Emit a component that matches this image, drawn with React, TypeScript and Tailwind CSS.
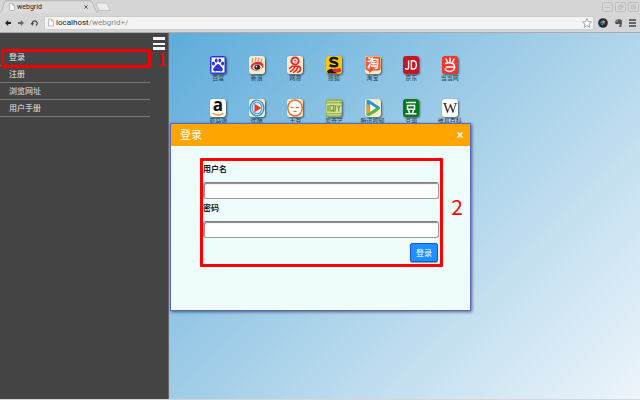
import React from "react";

const FONT = "font-['Open_Sans','Noto_Sans_CJK_SC',sans-serif]";

function PageGlyph({ className }: { className: string }) {
  return (
    <svg viewBox="0 0 6 8" className={className} aria-hidden="true">
      <path d="M0.5 0.5H3.5L5.5 2.5V7.5H0.5Z" fill="#fafafa" stroke="#a3a3a3" strokeWidth="0.7" />
      <path d="M3.5 0.5V2.5H5.5" fill="none" stroke="#a3a3a3" strokeWidth="0.6" />
    </svg>
  );
}

function BrowserChrome() {
  return (
    <header className="shrink-0 border-b border-[#aaaaaa] bg-[#d6d6d6] font-['Roboto',sans-serif]">
      <div className="relative flex h-[13px] items-center">
        <svg viewBox="0 0 112 13" className="absolute left-0 top-0 h-[13px] w-28" aria-hidden="true">
          <path d="M0 12.5C3 12 3 1 6 0.8H90C94 1 94 12 98 12.5" fill="#dcdcdc" stroke="#aaaaaa" strokeWidth="0.8" />
          <path d="M96 3H107L110 10.5H99Z" fill="#ececec" stroke="#b8b8b8" strokeWidth="0.7" strokeLinejoin="round" />
        </svg>
        <div className="relative flex w-[92px] items-center gap-[2px] pl-[9px] pr-[2px]">
          <PageGlyph className="h-2 w-[6px]" />
          <span className="flex-1 text-[7px] leading-[10px] text-[#222222]">webgrid</span>
          <button aria-label="Close tab" className="flex w-2 justify-center">
            <svg viewBox="0 0 4 4" className="h-1 w-1"><path d="M0.3 0.3L3.7 3.7M3.7 0.3L0.3 3.7" stroke="#555555" strokeWidth="0.9" /></svg>
          </button>
        </div>
        <div className="ml-auto flex gap-[2px] pr-px">
          {["M3 5.5H8", "M3.5 4.5H6.5V7H3.5ZM5 4.5V3H8V5.5H6.5", "M3.5 3L7.5 7M7.5 3L3.5 7M3.5 3H7.5V7H3.5Z"].map((d, i) => (
            <button key={d} aria-label={["Minimise", "Restore", "Close"][i]}>
              <svg viewBox="0 0 11 10" className="h-[10px] w-[11px]" fill="none" stroke="#b8b8b8" strokeWidth="0.8">
                <rect x="0.5" y="0.5" width="10" height="9" rx="1" />
                <path d={d} />
              </svg>
            </button>
          ))}
        </div>
      </div>
      <div className="flex h-[19px] items-center pl-1">
        <div className="flex w-10 items-center gap-[5px]">
          <button aria-label="Back"><svg viewBox="0 0 8 8" className="h-2 w-2"><path d="M1 4L4.2 1V3H7V5H4.2V7Z" fill="#222222" /></svg></button>
          <button aria-label="Forward"><svg viewBox="0 0 8 8" className="h-2 w-2"><path d="M7 4L3.8 1V3H1V5H3.8V7Z" fill="#666666" /></svg></button>
          <button aria-label="Reload"><svg viewBox="0 0 8 8" className="h-2 w-2"><path d="M2.4 5A2.4 2.4 0 1 1 6 6.4" fill="none" stroke="#444444" strokeWidth="1.2" /><path d="M0.6 4H4L2.3 6.8Z" fill="#444444" /></svg></button>
        </div>
        <div className="flex h-[14px] flex-1 items-center gap-[2px] rounded-[1px] border border-[#cccccc] bg-[#f3f3f3] pl-[3px] pr-px">
          <PageGlyph className="h-[9px] w-[6px]" />
          <span className="flex-1 text-[8px] leading-[12px] text-[#888888]"><span className="text-[#222222]">localhost</span>/webgrid+/</span>
          <svg viewBox="0 0 24 24" className="h-[10px] w-[10px]" aria-hidden="true"><path d="M12 1.5L15.2 8.6L23 9.4L17.2 14.6L18.8 22.3L12 18.4L5.2 22.3L6.8 14.6L1 9.4L8.8 8.6Z" fill="#fafafa" stroke="#999999" strokeWidth="2" /></svg>
        </div>
        <div className="flex items-center gap-[6px] pl-[4px] pr-1">
          <svg viewBox="0 0 10 10" className="h-[10px] w-[10px]" aria-hidden="true">
            <circle cx="5" cy="5" r="4.8" fill="#25272d" />
            <path d="M5 5L3 3L5.5 2Z" fill="#18a86b" /><path d="M5 5L5.5 2L7.5 4Z" fill="#e6c52b" /><path d="M5 5L7.5 4.5L6.5 7Z" fill="#da3d4d" /><path d="M5 5L5 7.8L2.5 6Z" fill="#3277e0" /><path d="M5 5L2.3 5.5L3 3Z" fill="#22b8c9" />
          </svg>
          <svg viewBox="0 0 10 10" className="h-[10px] w-[9px]" aria-hidden="true"><path d="M1 3L3.2 0.8V3ZM3.8 0.8H5.5L8 1.5C9 2 9 6 8.3 8.5C8 9.7 5.5 9.6 5.5 8.3C5.5 7.2 7 7.4 7 7.4C7 6.5 5.6 6.3 5.2 5.5C5 6.5 2.5 6.4 1.7 5.8C1.2 5.2 1 4.2 1 3.6H3.8Z" fill="#505050" /></svg>
          <button aria-label="Browser menu"><svg viewBox="0 0 7 8" className="h-2 w-[7px]"><path d="M0 1H7M0 4H7M0 7H7" stroke="#444444" strokeWidth="1.3" /></svg></button>
        </div>
      </div>
    </header>
  );
}

const MENU = ["登录", "注册", "浏览网址", "用户手册"];

function Sidebar() {
  return (
    <aside className="relative w-[169px] shrink-0 border-r border-[#666666] bg-[#444444]">
      <div className="flex h-4 justify-end pr-[3px] pt-1">
        <button aria-label="菜单" className="flex h-[13px] w-3 flex-col justify-between">
          <span className="h-[3px] w-full bg-[#f4f4f4]" />
          <span className="h-[2px] w-full bg-white" />
          <span className="h-[3px] w-full bg-[#f4f4f4]" />
        </button>
      </div>
      <nav className="mr-[18px]">
        {MENU.map((label) => (
          <a key={label} href="#" className="block border-b border-[#777777] pl-[9px] text-[8px] leading-4 text-[#e4e4e4]">
            {label}
          </a>
        ))}
      </nav>
      <div className="pointer-events-none absolute left-[1px] top-4 h-[19px] w-[150px] rounded-[2px] border-[3px] border-[#f40000]" />
      <span className="absolute right-[1px] top-[15px] font-['Noto_Sans_CJK_SC',sans-serif] text-[18px] leading-5 text-[#f40000]">1</span>
    </aside>
  );
}

const SITES: { name: string; tile: string; art: React.ReactNode }[] = [
  { name: "百度", tile: "bg-white", art: (<><rect width="16" height="18" rx="2" fill="#2b36dc" /><rect x="1.5" y="1.5" width="13" height="15" fill="#fff" /><g fill="#2b36dc"><ellipse cx="3.4" cy="7.6" rx="1.5" ry="2" /><ellipse cx="6.2" cy="4.6" rx="1.4" ry="2" /><ellipse cx="9.8" cy="4.6" rx="1.4" ry="2" /><ellipse cx="12.6" cy="7.6" rx="1.5" ry="2" /><path d="M8 8C10 8 10.5 10.3 12 11.5C13.5 13 12.8 15.6 10.8 15.4C9 15 7 15 5.2 15.4C3.2 15.6 2.5 13 4 11.5C5.5 10.3 6 8 8 8Z" /></g></>) },
  { name: "新浪", tile: "bg-[#f6edc8]", art: (<><path d="M3.5 7C2 4 4.5 4 3.5 2M6.5 5.5C5.5 4 8 3 6.5 1.5M9.5 5.5C8.5 4 10.5 3 9.5 1.5M12.5 6.5C11.5 5 13.5 4 12.5 2.5" stroke="#ee7f74" strokeWidth="1.1" fill="none" /><path d="M1.5 11C2 5.5 12.5 3.5 14.5 9C15 14.5 4 17.5 1.5 11Z" fill="#e02b30" /><ellipse cx="8.3" cy="11.2" rx="4.6" ry="2.8" fill="#fff" /><ellipse cx="8.3" cy="11.2" rx="3" ry="2.5" fill="#202020" /><circle cx="7.5" cy="10.6" r="0.9" fill="#fff" /></>) },
  { name: "网易", tile: "bg-[#f6edc8]", art: (<><ellipse cx="8" cy="5" rx="4.6" ry="4.4" fill="#ed2024" /><path d="M6 5.2H10.2C10.2 2.2 6 2.2 6 5.2C6 7.4 9 7.5 10 6.4" fill="none" stroke="#fff" strokeWidth="1.1" /><path d="M5 10.3H11.5C14.5 10.8 14 16 10.5 16.2M5 10.3C3.8 11.8 3 12 2.5 12.4M7.5 11.5C6.5 13.5 5 14.8 3.5 15.5M10.8 11.5C10 13.8 8.5 15.3 6.5 16.3" stroke="#ed2024" strokeWidth="1.5" fill="none" strokeLinecap="round" /></>) },
  { name: "搜狐", tile: "bg-[#fbc800]", art: (<><path d="M12 3.2C9 1.4 4.5 1.6 4.5 4.2C4.5 7 11.2 5.6 11.2 8.4C11.2 10.8 6.5 10.8 3.5 9.2" stroke="#151515" strokeWidth="2.5" fill="none" /><path d="M1 15.5C3 12.5 6 12 8.5 14L11 17.5H2Z" fill="#171717" /><path d="M6 14C8 11.5 11.5 14 14 11.5L15.5 15C13 17 9 17.5 6 14Z" fill="#e82929" /></>) },
  { name: "淘宝", tile: "bg-[#f6edc8]", art: (<><rect x="0.5" y="0.5" width="15" height="14" rx="2" fill="#f15a29" /><path d="M2 13H9L4 17.5C5 15.5 3 15 2 13Z" fill="#f15a29" /><text x="8" y="12" textAnchor="middle" fontSize="12" fontWeight="700" fill="#fff">淘</text></>) },
  { name: "京东", tile: "bg-[#c81623]", art: (<path d="M5.6 4.5V11.5C5.6 13.7 2.6 13.7 2.4 12M8.4 4.8V13H10C14.5 13 14.5 4.8 10 4.8H7.8" fill="none" stroke="#fff" strokeWidth="1.4" />) },
  { name: "当当网", tile: "bg-[#fa342d]", art: (<path d="M8 2V6.5M4 3L5.5 6M12 3L10.5 6M3.5 7.5C6 6.5 11.5 6.5 12.2 9C13.8 13.5 10 15.7 7 15.5C4 15 3 13.8 3.5 12.5M4.5 11H12" fill="none" stroke="#fff" strokeWidth="1.5" strokeLinecap="round" />) },
  { name: "亚马逊", tile: "bg-white", art: (<><text x="8" y="12" textAnchor="middle" fontSize="17" fontWeight="700" fill="#111">a</text><path d="M2.5 14C6 16.6 10 16.6 13.5 14" stroke="#f7981d" strokeWidth="1.4" fill="none" /></>) },
  { name: "优酷", tile: "bg-[#f6edc8]", art: (<><ellipse cx="8" cy="9" rx="7.6" ry="8.6" fill="#2b91d3" /><ellipse cx="8" cy="9" rx="6.2" ry="7.2" fill="#e4f4fb" /><ellipse cx="8" cy="9" rx="5.4" ry="6.3" fill="#3d9fd9" /><ellipse cx="8" cy="9" rx="4.3" ry="5.2" fill="#dcebf0" /><path d="M5.5 4.8L12.3 9L5.5 13.2Z" fill="#ed3629" /></>) },
  { name: "土豆", tile: "bg-[#f6edc8]", art: (<><ellipse cx="8" cy="9" rx="7.2" ry="8" fill="#fff" stroke="#f26522" strokeWidth="1.4" /><path d="M3.5 8.5H6.5M9 8.5H12M6.5 12C7.5 12.7 8.5 12.7 9.5 12" stroke="#f26522" strokeWidth="1.2" fill="none" /></>) },
  { name: "爱奇艺", tile: "bg-[#9bb552]", art: (<><path d="M1 2.5H15M1 15.7H15" stroke="#c6d78a" strokeWidth="1.2" /><rect x="0.5" y="4.5" width="15" height="9.5" rx="1" fill="#d6e2a4" /><path d="M2 6V12.5M4 6.7H7.5V11.8H4ZM6 10.5L8 13M9.3 6V12.5M10.8 6L12.7 9L14.6 6M12.7 9V12.5" fill="none" stroke="#7f9d38" strokeWidth="1.3" /></>) },
  { name: "腾讯视频", tile: "bg-[#f6edc8]", art: (<><path d="M1.5 2C1.5 0 4 1 5 1.5L14 7.5C15.5 9 15.5 9.5 14 10.5L5 16.5C3 17.5 1.5 17 1.5 15Z" fill="#2599d5" /><path d="M3 9V16.5C9 15 13.5 11.5 15 9C11.5 10 7 8 3 9Z" fill="#5fb53a" /><path d="M1.5 5L4.5 6L4.5 13L1.5 16Z" fill="#f9a01b" /><path d="M5 5L11 9L5 13Z" fill="#fff" /></>) },
  { name: "豆瓣", tile: "bg-[#08791a]", art: (<path d="M3 3.5H13M4.5 6.5H11.5V10.3H4.5ZM5.5 11L6.5 14M10.5 11L9.5 14M2.5 14.7H13.5" fill="none" stroke="#fff" strokeWidth="1.5" />) },
  { name: "维基百科", tile: "bg-white", art: (<text x="8" y="14" textAnchor="middle" fontSize="15" fill="#222" className="font-['Liberation_Serif',serif]">W</text>) },
];

function SiteGrid() {
  return (
    <div className="grid w-[270px] grid-cols-7 gap-y-[15px] pt-[23px]">
      {SITES.map((site) => (
        <a key={site.name} href="#" className="flex h-7 flex-col items-center whitespace-nowrap text-[6px] leading-[9px] text-[#29404e]">
          <span className={"h-[18px] w-4 shrink-0 rounded-[3px] shadow-[1px_1px_2px_#0008] " + site.tile}>
            <svg viewBox="0 0 16 18" className="h-[18px] w-4 overflow-visible" aria-hidden="true">{site.art}</svg>
          </span>
          {site.name}
        </a>
      ))}
    </div>
  );
}

function Field({ id, label, type }: { id: string; label: string; type: string }) {
  return (
    <div className="h-[39px]">
      <label htmlFor={id} className="block h-[21px] pt-[2px] text-[8px] font-bold leading-[12px] text-[#222222]">{label}</label>
      <input id={id} type={type} className="block h-[17px] w-full rounded-[3px] border border-[#999999] border-t-[#808080] bg-white px-1 text-[8px] shadow-[inset_1px_1px_1px_#888888] outline-none" />
    </div>
  );
}

function LoginDialog() {
  return (
    <section role="dialog" aria-labelledby="login-title" className="absolute left-px top-[90px] h-[188px] w-[301px] border border-[#5a63c8] bg-[#eefcfc] shadow-[1px_1px_3px_#0008]">
      <div className="flex h-[22px] items-center justify-between bg-[#ffa500] pl-[9px] pr-[7px] text-white">
        <h1 id="login-title" className="text-[11px] leading-[16px]">登录</h1>
        <button aria-label="关闭"><svg viewBox="0 0 6 6" className="h-[6px] w-[6px]"><path d="M0.6 0.4L5.4 5.6M5.4 0.4L0.6 5.6" stroke="#fff" strokeWidth="1.5" /></svg></button>
      </div>
      <form className="ml-[29px] mr-[27px] mt-3 flex h-[109px] flex-col rounded-[1px] border-[3px] border-[#ff0000] pr-px" onSubmit={(e) => e.preventDefault()}>
        <Field id="username" label="用户名" type="text" />
        <Field id="password" label="密码" type="password" />
        <button type="submit" className="mr-px mt-1 h-[19px] w-7 self-end rounded-[2px] border border-[#2450df] bg-[#1e90ff] text-[8px] leading-[15px] text-white shadow-[0_1px_1px_#0006]">登录</button>
      </form>
      <span className="absolute right-[7px] top-[70px] font-['Noto_Sans_CJK_SC',sans-serif] text-[21px] leading-6 text-[#ff0000]">2</span>
    </section>
  );
}

export default function App() {
  return (
    <div className={"flex h-screen flex-col overflow-hidden bg-[#d6d6d6] pb-px " + FONT}>
      <BrowserChrome />
      <div className="flex min-h-0 flex-1">
        <Sidebar />
        <main className="relative min-w-0 flex-1 bg-linear-135 from-[#5dacdb] via-[#a8d1e9] to-[#edf5fb] pl-[30px]">
          <SiteGrid />
          <LoginDialog />
        </main>
      </div>
    </div>
  );
}
